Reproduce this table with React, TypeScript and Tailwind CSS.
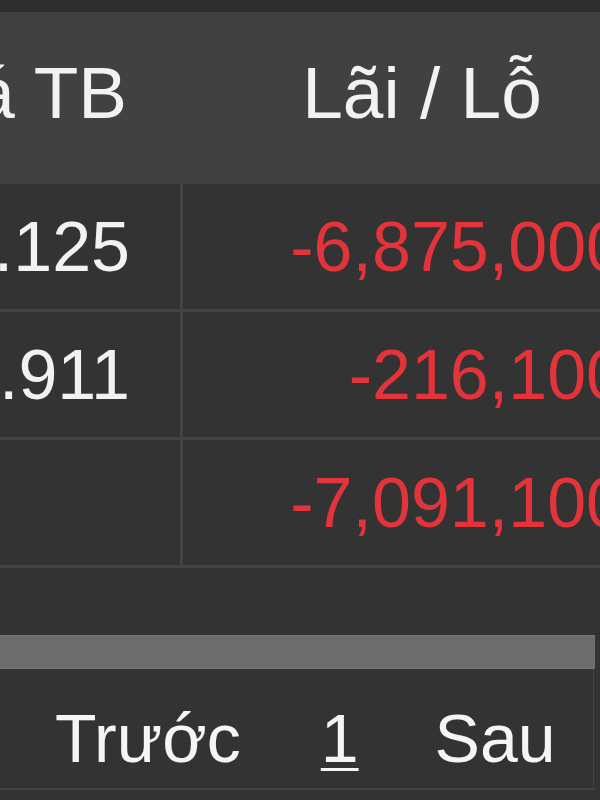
import React from "react";

const rows = [
  { avg: "25.125", pl: "-6,875,000" },
  { avg: "18.911", pl: "-216,100" },
  { avg: "", pl: "-7,091,100" },
];

export default function App() {
  return (
    <div
      className="w-[600px] h-[800px] overflow-hidden bg-[#333333]"
      style={{ fontFamily: '"Liberation Sans", Arial, sans-serif' }}
    >
      <div className="w-[661px]">
        <div className="h-[12px] bg-[#2e2e2e]" />
        <div className="flex h-[172px] bg-[#414141] text-[#f2f2f2] text-[73px] leading-none">
          <div className="w-[183px] shrink-0 flex items-center justify-end pr-[56px] pb-[12px] whitespace-nowrap">
            Giá TB
          </div>
          <div className="w-[478px] shrink-0 flex items-center justify-center pb-[12px] whitespace-nowrap">
            Lãi / Lỗ
          </div>
        </div>
        {rows.map((r, i) => (
          <div
            key={i}
            className="flex h-[128px] border-b-[3px] border-[#444444] text-[70px] leading-none"
          >
            <div className="w-[183px] shrink-0 border-r-[3px] border-[#444444] flex items-center justify-end pr-[50px] text-[#f2f2f2] whitespace-nowrap">
              {r.avg}
            </div>
            <div className="w-[478px] shrink-0 flex items-center justify-end pr-[36px] text-[#e3343b] whitespace-nowrap">
              {r.pl}
            </div>
          </div>
        ))}
        <div className="h-[67px]" />
        <div className="h-[34px] w-[595px] bg-[#6d6d6d] border-y border-[#777777]" />
        <div className="h-[121px] w-[594px] border-r border-b-[2px] border-[#444444] flex items-end pb-[16px] pl-[55px] text-[68px] leading-none text-[#f5f5f5] whitespace-nowrap">
          <span>Trước</span>
          <span className="ml-[80px] underline underline-offset-[6px] decoration-[3px]">1</span>
          <span className="ml-[76px]">Sau</span>
        </div>
      </div>
    </div>
  );
}
